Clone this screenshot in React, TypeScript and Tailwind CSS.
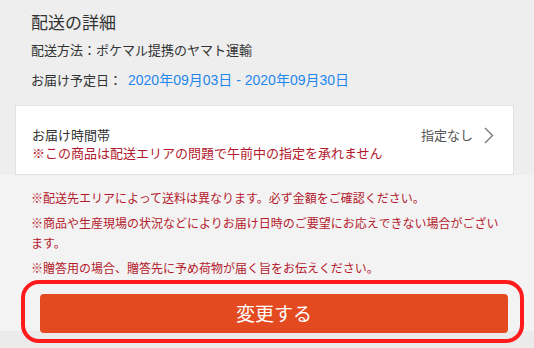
import React from 'react';

const NOTES = [
  "※配送先エリアによって送料は異なります。必ず金額をご確認ください。",
  "※商品や生産現場の状況などによりお届け日時のご要望にお応えできない場合がございます。",
  "※贈答用の場合、贈答先に予め荷物が届く旨をお伝えください。",
];

export default function App() {
  return (
    <div
      className="relative w-[534px] h-[348px] overflow-hidden bg-[#eeeeee] text-[#333333]"
      style={{ fontFamily: '"Noto Sans CJK JP", "Noto Sans", sans-serif' }}
    >
      {/* delivery summary */}
      <div className="px-[31px] pt-[10px] pb-[15px]">
        <h2 className="text-[17px] leading-[24px]">配送の詳細</h2>
        <p className="mt-[6px] text-[13px] leading-[20px]">配送方法：ポケマル提携のヤマト運輸</p>
        <p className="mt-[10px] flex items-center text-[13px] leading-[20px]">
          お届け予定日：
          <span
            className="ml-[6px] text-[14px] text-[#1f87ee]"
            style={{ fontFamily: '"Liberation Sans", "Noto Sans CJK JP", sans-serif' }}
          >
            2020年09月03日 - 2020年09月30日
          </span>
        </p>
      </div>

      <div className="ml-[15px] w-[499px] h-[70px] bg-white border border-[#e2e2e2] pl-[16px] pr-[19px] pt-[20px]">
        <div className="flex items-center justify-between h-[18px]">
          <span className="text-[13px] leading-[18px]">お届け時間帯</span>
          <div className="flex items-center gap-[11px] text-[13px] text-[#555555]">
            <span className="leading-[18px]">指定なし</span>
            <svg width="10" height="17" viewBox="0 0 10 17" fill="none">
              <path d="M1 1l7.5 7.5L1 16" stroke="#777777" strokeWidth="1.4" />
            </svg>
          </div>
        </div>
        <p className="text-[13px] leading-[18px] text-[#b3192c]">
          ※この商品は配送エリアの問題で午前中の指定を承れません
        </p>
      </div>

      <div className="h-[156px] bg-[#f3f3f3] pt-[13px]">
        <div className="px-[31px]">
          {NOTES.map((n, i) => (
            <p key={i} className="mb-[5px] text-[12px] leading-[20px] text-[#b3192c]">{n}</p>
          ))}
        </div>
        <button className="relative z-10 mt-[11px] ml-[40px] w-[468px] h-[39px] rounded-[4px] bg-[#e44a1f] text-white text-[19px]">
          変更する
        </button>
      </div>
      <div className="h-[17px] bg-[#ebebeb]" />

      {/* highlight annotation */}
      <div className="absolute z-20 left-[21px] top-[280px] w-[503px] h-[63px] rounded-[18px] border-[4px] border-[#ff1b1b] pointer-events-none" />
    </div>
  );
}
